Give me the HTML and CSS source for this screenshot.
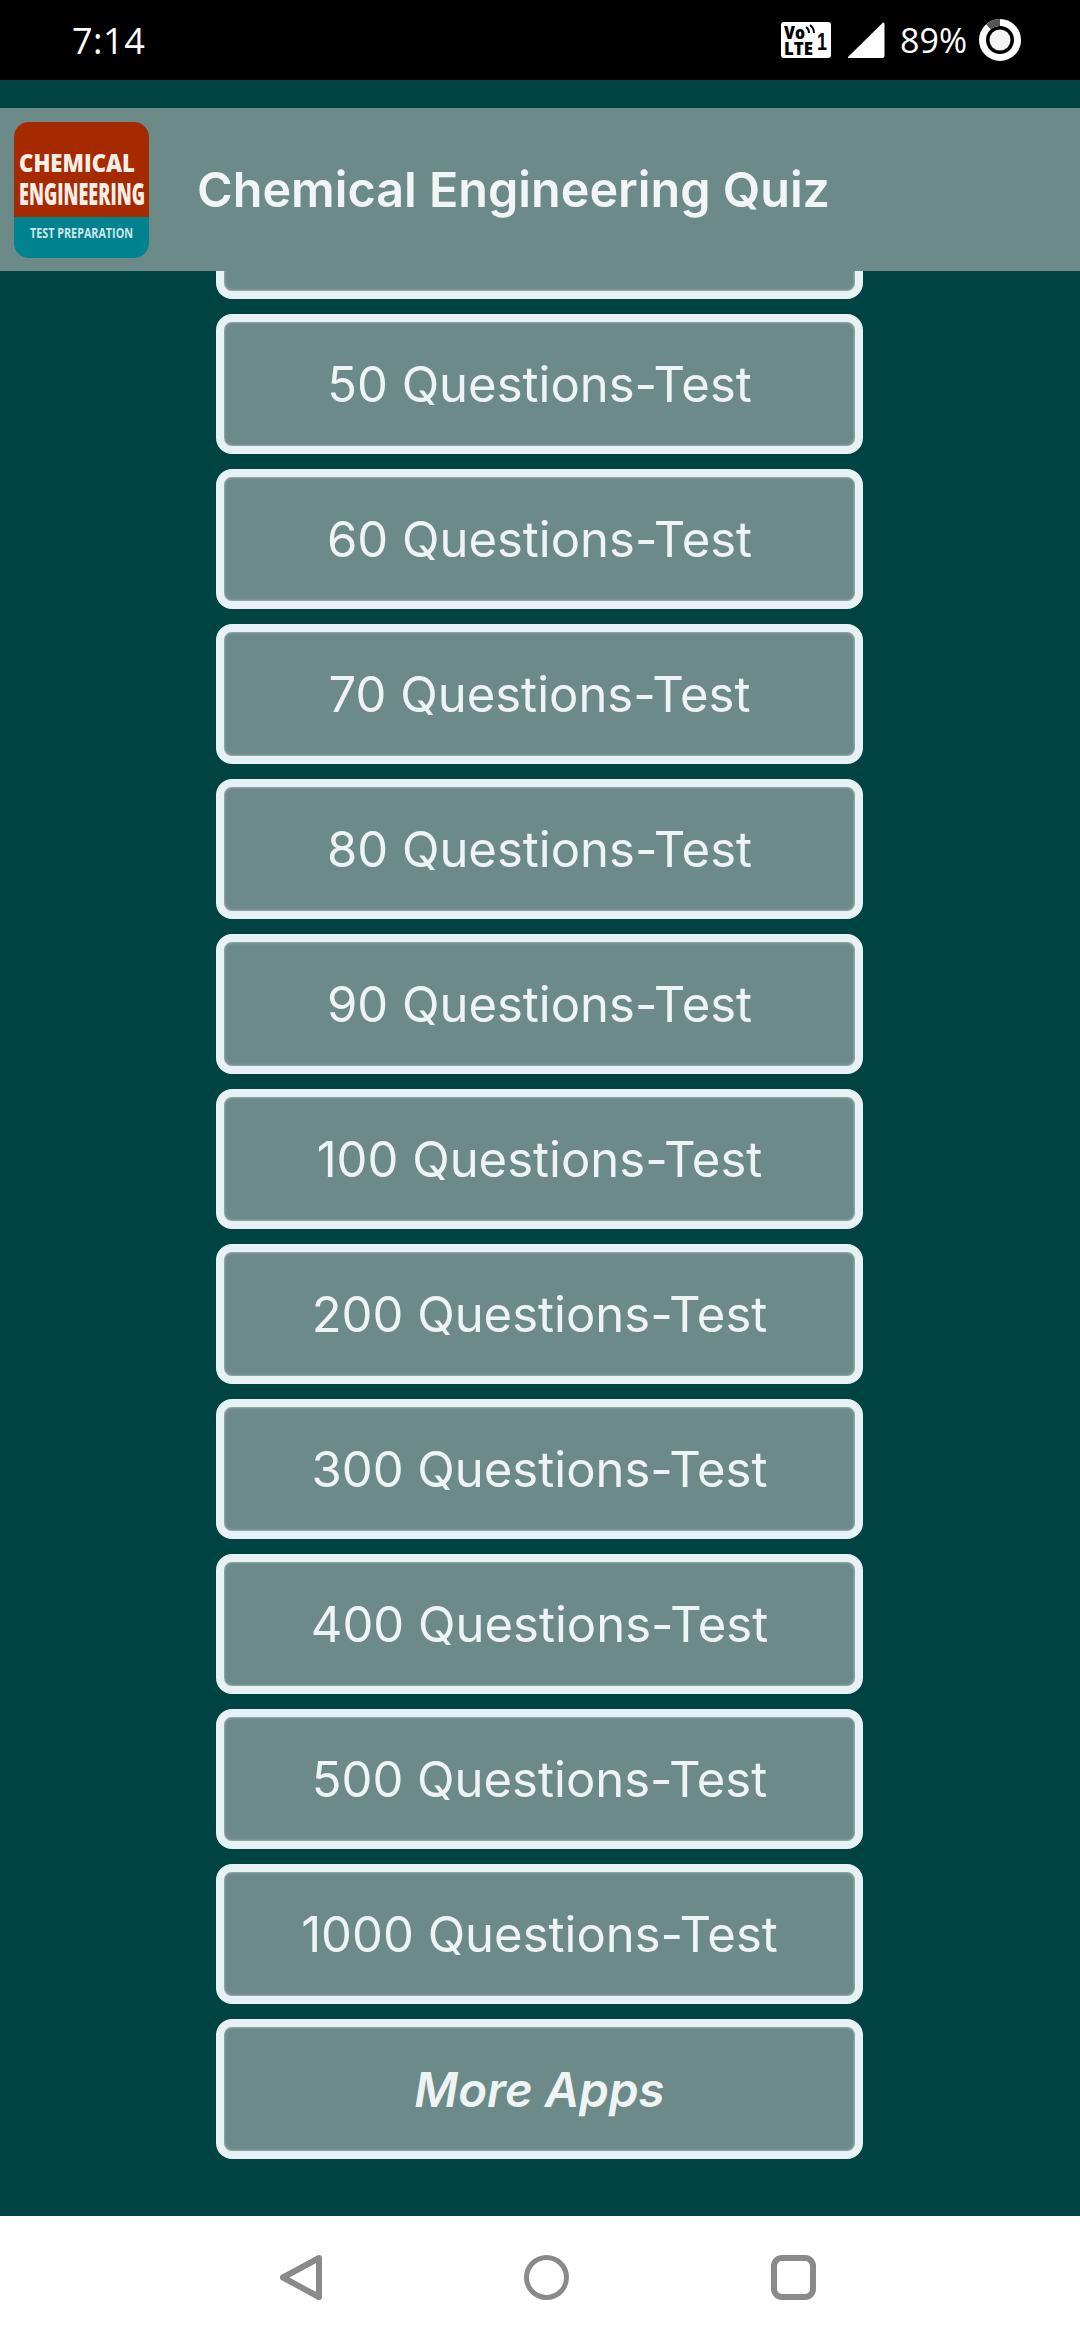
FILE: index.html
```html
<!DOCTYPE html>
<html lang="en">
<head>
    <meta charset="UTF-8" />
    <meta name="viewport" content="width=device-width, initial-scale=1" />
    <title>Chemical Engineering Quiz</title>
    <link rel="stylesheet" href="styles.css">
</head>
<body>
    <div class="status-bar">
        <span class="clock">7:14</span>
        <div class="status-right">
            <svg class="volte" width="50" height="36" viewBox="0 0 50 36">
                <rect x="0" y="0" width="50" height="36" rx="3" fill="#fff"/>
                <text x="3" y="17" class="volte-text" textLength="21" lengthAdjust="spacingAndGlyphs">Vo</text>
                <text x="3" y="33" class="volte-text" textLength="29" lengthAdjust="spacingAndGlyphs">LTE</text>
                <text x="36" y="28" class="volte-num" textLength="10" lengthAdjust="spacingAndGlyphs">1</text>
                <path d="M25 5q3 2 3 6M29 3q4 3 4 8" fill="none" stroke="#000" stroke-width="2"/>
            </svg>
            <svg class="signal" width="38" height="38" viewBox="0 0 38 38">
                <path d="M36 1.500 Q37.500 1 37.500 3 V35 Q37.500 37 35.500 37 H2 Q0 37 1.500 35.500 Z" fill="#fff"/>
            </svg>
            <span class="battery-text">89%</span>
            <svg class="battery" width="44" height="44" viewBox="0 0 44 44">
                <circle cx="22" cy="22" r="17.500" fill="none" stroke="#fff" stroke-width="7"/>
                <path d="M22 4.500 A17.500 17.500 0 0 0 10.500 8.800" fill="none" stroke="#555" stroke-width="7"/>
                <circle cx="22" cy="22" r="10.500" fill="#f4f4f4"/>
            </svg>
        </div>
    </div>

    <div class="main">
        <div class="app-bar">
            <svg class="logo" width="135" height="136" viewBox="0 0 135 136">
                <defs>
                    <clipPath id="logoClip"><rect width="135" height="136" rx="15"/></clipPath>
                </defs>
                <g clip-path="url(#logoClip)">
                    <rect width="135" height="95" fill="#a52a00"/>
                    <rect y="95" width="135" height="41" fill="#00838f"/>
                </g>
                <text x="5" y="50" class="logo-top" textLength="116" lengthAdjust="spacingAndGlyphs">CHEMICAL</text>
                <text x="5" y="83" class="logo-mid" textLength="126" lengthAdjust="spacingAndGlyphs">ENGINEERING</text>
                <text x="16" y="116" class="logo-small" textLength="103" lengthAdjust="spacingAndGlyphs">TEST PREPARATION</text>
            </svg>
            <h1 class="app-title">Chemical Engineering Quiz</h1>
        </div>

        <div class="scroll-area">
            <div class="test-list">
                <div class="test-btn"></div>
                <button class="test-btn">50 Questions-Test</button>
                <button class="test-btn">60 Questions-Test</button>
                <button class="test-btn">70 Questions-Test</button>
                <button class="test-btn">80 Questions-Test</button>
                <button class="test-btn">90 Questions-Test</button>
                <button class="test-btn">100 Questions-Test</button>
                <button class="test-btn">200 Questions-Test</button>
                <button class="test-btn">300 Questions-Test</button>
                <button class="test-btn">400 Questions-Test</button>
                <button class="test-btn">500 Questions-Test</button>
                <button class="test-btn">1000 Questions-Test</button>
                <button class="test-btn more-apps">More Apps</button>
            </div>
        </div>
    </div>

    <div class="nav-bar">
        <svg width="45" height="45" viewBox="0 0 45 45">
            <path d="M42 3 L6 22.500 L42 42 Z" fill="none" stroke="#8a8a8a" stroke-width="6" stroke-linejoin="round"/>
        </svg>
        <svg width="45" height="45" viewBox="0 0 45 45">
            <circle cx="22.500" cy="22.500" r="20" fill="none" stroke="#8a8a8a" stroke-width="5"/>
        </svg>
        <svg width="45" height="45" viewBox="0 0 45 45">
            <rect x="3" y="3" width="39" height="39" rx="8" fill="none" stroke="#8a8a8a" stroke-width="6"/>
        </svg>
    </div>
</body>
</html>
```

FILE: styles.css
```css
body {
    margin: 0;
    width: 1080px;
    height: 2340px;
    display: flex;
    flex-direction: column;
    overflow: hidden;
    font-family: Inter, "Liberation Sans", sans-serif;
    background-color: #004343;
}
.status-bar {
    height: 80px;
    flex-shrink: 0;
    background: #000;
    color: #fff;
    display: flex;
    align-items: center;
    justify-content: space-between;
    padding: 0 58px 0 72px;
    font-family: "Open Sans", sans-serif;
}
.clock {
    font-size: 36px;
    letter-spacing: 0.5px;
}
.status-right {
    display: flex;
    align-items: center;
}
.volte-text {
    font-family: "Open Sans", sans-serif;
    font-weight: 800;
    font-size: 18px;
    fill: #000;
}
.volte-num {
    font-family: "Liberation Sans", sans-serif;
    font-weight: 700;
    font-size: 24px;
    fill: #000;
}
.signal {
    margin-left: 16px;
}
.battery-text {
    font-size: 34px;
    margin-left: 15px;
}
.battery {
    margin-left: 11px;
}
.main {
    flex: 1;
    min-height: 0;
    display: flex;
    flex-direction: column;
    padding-top: 28px;
    background-color: #004343;
}
.app-bar {
    height: 163px;
    flex-shrink: 0;
    display: flex;
    align-items: center;
    background-color: #6c8a88;
    padding-left: 14px;
    position: relative;
    z-index: 1;
}
.logo {
    flex-shrink: 0;
}
.logo-top {
    font-family: "Open Sans", sans-serif;
    font-weight: 800;
    font-size: 25px;
    fill: #f7eee8;
}
.logo-mid {
    font-family: "Open Sans", sans-serif;
    font-weight: 800;
    font-size: 30px;
    fill: #f7eee8;
}
.logo-small {
    font-family: "Open Sans", sans-serif;
    font-weight: 700;
    font-size: 14px;
    fill: #cfe6e8;
}
.app-title {
    margin: 0 0 0 48px;
    font-size: 48.500px;
    font-weight: 600;
    color: #f1f5f5;
}
.scroll-area {
    flex: 1;
    min-height: 0;
    overflow: hidden;
}
.test-list {
    display: flex;
    flex-direction: column;
    align-items: center;
    gap: 15px;
    margin-top: -112px;
    padding-right: 1px;
}
.test-btn {
    width: 647px;
    height: 140px;
    flex-shrink: 0;
    box-sizing: border-box;
    background-color: #6c8a88;
    border: 8px solid #e8f1f3;
    border-radius: 16px;
    box-shadow: inset 0 0 3px #c3d2d2;
    color: #eef3f3;
    font-family: inherit;
    font-size: 49px;
    padding: 0;
}
.more-apps {
    font-style: italic;
    font-weight: 600;
    font-size: 47.500px;
}
.nav-bar {
    height: 124px;
    flex-shrink: 0;
    background: #fff;
    display: flex;
    justify-content: center;
    gap: 202px;
    padding: 39px 0 0 13px;
    box-sizing: border-box;
}
```
